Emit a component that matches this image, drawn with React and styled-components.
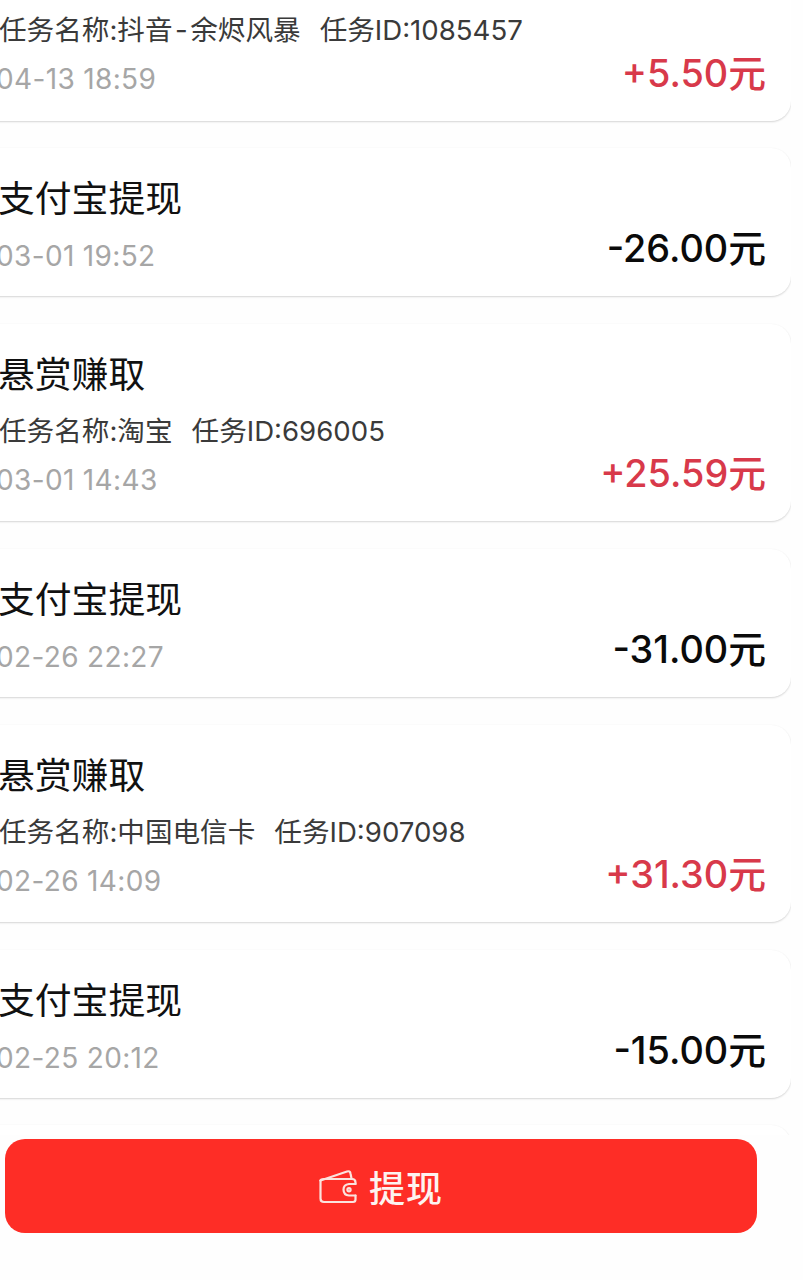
import React from 'react';
import styled, { createGlobalStyle } from 'styled-components';

const GlobalStyle = createGlobalStyle`
  html, body {
    margin: 0;
    padding: 0;
    background: #fefefe;
  }
`;

const Page = styled.div`
  display: flex;
  flex-direction: column;
  width: 803px;
  height: 1280px;
  overflow: hidden;
  background: #fefefe;
  font-family: Inter, "Noto Sans CJK SC", sans-serif;
`;

const List = styled.div`
  flex: 1;
  min-height: 0;
  overflow: hidden;
  display: flex;
  flex-direction: column;
  gap: 27.7px;
  margin: -77px 12px 0 -25px;
`;

const Card = styled.div`
  flex: none;
  position: relative;
  height: ${(p) => (p.$tall ? 197.7 : 147.7)}px;
  box-sizing: border-box;
  padding: 30px 25px 0 24px;
  background: #fff;
  border-radius: 20px;
  box-shadow: 0 1px 2px rgba(0, 0, 0, 0.16), 0 0 3px rgba(0, 0, 0, 0.02);
`;

const Title = styled.div`
  min-height: 42px;
  margin-left: -1px;
  font-size: 36.8px;
  line-height: 42px;
  color: #111;
`;

const Sub = styled.div`
  margin-top: 17px;
  display: flex;
  gap: 19px;
  font-size: 27.6px;
  line-height: 36px;
  color: #3a3a3a;
  white-space: nowrap;
`;

const Dash = styled.span`
  margin: 0 2.5px;
`;

const Time = styled.div`
  margin: ${(p) => (p.$tall ? 13 : 18)}px 0 0 -3px;
  font-size: 28px;
  letter-spacing: 0.35px;
  line-height: 36px;
  color: #a6a6a6;
`;

const Amount = styled.div`
  position: absolute;
  right: 25px;
  bottom: 25px;
  font-size: 37.8px;
  line-height: 46px;
  font-weight: 500;
  color: ${(p) => (p.$income ? '#d8394a' : '#0a0a0a')};
`;

const Footer = styled.div`
  flex: none;
  height: 145px;
  box-sizing: border-box;
  padding: 4px 0 0 5px;
  background: #fefefe;
`;

const WithdrawButton = styled.div`
  width: 752px;
  height: 94px;
  display: flex;
  align-items: center;
  justify-content: center;
  gap: 12px;
  background: #fe2d26;
  border-radius: 20px;
  color: #fdf3f0;
  font-size: 36px;
  font-weight: 500;
  letter-spacing: 1px;
`;

const WalletIcon = () => (
  <svg width="38" height="35" viewBox="0 0 38 34" fill="none" stroke="#fbe3de" strokeWidth="2.2" strokeLinejoin="round" strokeLinecap="round">
    <path d="M1.5 11 L28 2 Q31 1 31.5 4 L32.5 9" />
    <path d="M1.5 11 V29 Q1.5 32.5 5 32.5 H34 Q36.5 32.5 36.5 30 V26" />
    <path d="M1.5 11 Q2 9.5 5 9.5 H33 Q36.5 9.5 36.5 13 V14.5" />
    <path d="M36.5 14.5 H30 Q24.5 15 24.5 20 Q24.5 25.5 30 26 H36.5" />
    <circle cx="30" cy="20.2" r="1.6" />
  </svg>
);

const records = [
  { name: <>抖音<Dash>-</Dash>余烬风暴</>, id: '1085457', time: '04-13 18:59', amount: '+5.50元' },
  { title: '支付宝提现', time: '03-01 19:52', amount: '-26.00元' },
  { title: '悬赏赚取', name: '淘宝', id: '696005', time: '03-01 14:43', amount: '+25.59元' },
  { title: '支付宝提现', time: '02-26 22:27', amount: '-31.00元' },
  { title: '悬赏赚取', name: '中国电信卡', id: '907098', time: '02-26 14:09', amount: '+31.30元' },
  { title: '支付宝提现', time: '02-25 20:12', amount: '-15.00元' },
];

export default function App() {
  return (
    <Page>
      <GlobalStyle />
      <List>
        {records.map((r, i) => (
          <Card key={i} $tall={!!r.name}>
            <Title>{r.title}</Title>
            {r.name && (
              <Sub>
                <span>任务名称:{r.name}</span>
                <span>任务ID:{r.id}</span>
              </Sub>
            )}
            <Time $tall={!!r.name}>{r.time}</Time>
            <Amount $income={r.amount[0] === '+'}>{r.amount}</Amount>
          </Card>
        ))}
        {/* next record is scrolled under the footer, only its top edge shows */}
        <Card />
      </List>
      <Footer>
        <WithdrawButton>
          <WalletIcon />
          提现
        </WithdrawButton>
      </Footer>
    </Page>
  );
}
